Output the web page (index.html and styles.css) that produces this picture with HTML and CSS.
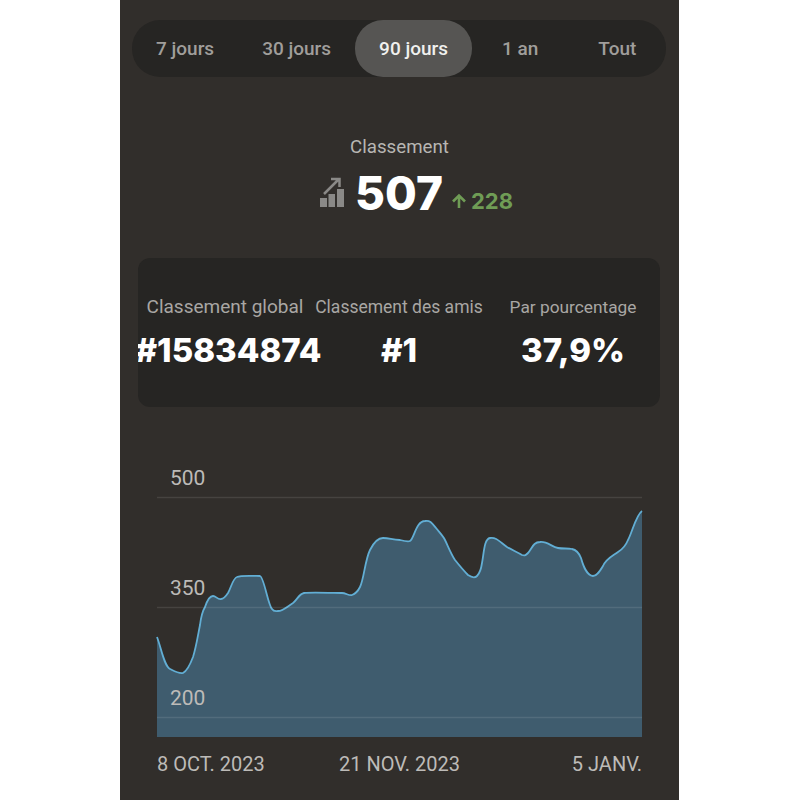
FILE: index.html
```html
<!DOCTYPE html>
<html lang="fr">

<head>
    <meta charset="UTF-8">
    <meta name="viewport" content="width=device-width, initial-scale=1.0">
    <title>Classement</title>
    <link rel="stylesheet" href="styles.css">
</head>

<body>

    <section class="ecran">
        <div class="tabs">
            <div class="tab">7 jours</div>
            <div class="tab">30 jours</div>
            <div class="tab active">90 jours</div>
            <div class="tab">1 an</div>
            <div class="tab">Tout</div>
        </div>

        <p class="titre">Classement</p>
        <div class="score">
            <svg class="score-icon" width="26" height="32" viewBox="0 0 26 32">
                <rect x="1" y="21" width="7" height="9" />
                <rect x="9.5" y="17" width="6.5" height="13" />
                <rect x="18" y="12" width="7" height="18" />
                <path class="fleche" d="M5 17L20 2M12 2H20.5V10" />
            </svg>
            <span class="score-num">507</span>
            <svg class="up-icon" width="16" height="16" viewBox="0 0 16 16">
                <path d="M8 15V2.5M2 8.5L8 2.5L14 8.5" />
            </svg>
            <span class="score-diff">228</span>
        </div>

        <div class="stats">
            <div class="stat stat-global">
                <p>Classement global</p>
                <b>#15834874</b>
            </div>
            <div class="stat stat-amis">
                <p>Classement des amis</p>
                <b>#1</b>
            </div>
            <div class="stat stat-pourcent">
                <p>Par pourcentage</p>
                <b>37,9%</b>
            </div>
        </div>

        <svg class="chart" width="560" height="330" viewBox="120 460 560 330">
            <path class="area" d="M157 637C161 647 164 666 170 669C174 671 179 674 183 673C187 671 190 665 193 657C196 648 198 635 200 625C201 617 202 612 205 607C207 601 210 596 213 596C216 596 218 600 221 599C224 599 226 596 228 593C231 588 233 578 237 577C241 575 256 576 260 576C264 577 268 605 272 609C274 612 276 611 278 611C283 611 288 606 293 603C297 600 299 594 304 593C310 592 336 593 342 593C346 593 349 596 352 595C355 594 358 591 360 587C364 579 365 560 370 550C373 544 378 538 383 538C390 538 392 540 400 540C404 541 408 542 410 541C414 539 416 521 425 521C430 520 432 523 436 528C440 533 443 536 445 540C448 546 451 554 455 560C459 565 464 571 468 575C471 577 475 578 477 576C480 573 481 570 482 563C484 553 484 539 490 538C496 537 499 541 507 547C512 550 517 552 522 555C525 556 526 555 528 553C532 549 533 542 540 542C547 541 552 547 558 548C563 549 568 548 572 549C577 550 579 553 581 558C583 565 586 575 593 576C597 576 600 571 603 566C606 559 611 557 618 552C623 549 626 545 628 540C632 533 636 515 642 511V737H157Z" />
            <path class="courbe" d="M157 637C161 647 164 666 170 669C174 671 179 674 183 673C187 671 190 665 193 657C196 648 198 635 200 625C201 617 202 612 205 607C207 601 210 596 213 596C216 596 218 600 221 599C224 599 226 596 228 593C231 588 233 578 237 577C241 575 256 576 260 576C264 577 268 605 272 609C274 612 276 611 278 611C283 611 288 606 293 603C297 600 299 594 304 593C310 592 336 593 342 593C346 593 349 596 352 595C355 594 358 591 360 587C364 579 365 560 370 550C373 544 378 538 383 538C390 538 392 540 400 540C404 541 408 542 410 541C414 539 416 521 425 521C430 520 432 523 436 528C440 533 443 536 445 540C448 546 451 554 455 560C459 565 464 571 468 575C471 577 475 578 477 576C480 573 481 570 482 563C484 553 484 539 490 538C496 537 499 541 507 547C512 550 517 552 522 555C525 556 526 555 528 553C532 549 533 542 540 542C547 541 552 547 558 548C563 549 568 548 572 549C577 550 579 553 581 558C583 565 586 575 593 576C597 576 600 571 603 566C606 559 611 557 618 552C623 549 626 545 628 540C632 533 636 515 642 511" />
            <line class="grille" x1="157" y1="497.5" x2="642" y2="497.5" />
            <line class="grille" x1="157" y1="607.5" x2="642" y2="607.5" />
            <line class="grille" x1="157" y1="717.5" x2="642" y2="717.5" />
            <text class="axe valeur" x="170" y="485">500</text>
            <text class="axe valeur" x="170" y="595">350</text>
            <text class="axe valeur" x="170" y="705">200</text>
            <text class="axe" x="157" y="771">8 OCT. 2023</text>
            <text class="axe" x="339" y="771">21 NOV. 2023</text>
            <text class="axe fin" x="642" y="771">5 JANV.</text>
        </svg>
    </section>

</body>

</html>
```

FILE: styles.css
```css
body {
    margin: 0;
    background-color: white;
    font-family: Roboto, "Liberation Sans", sans-serif;
}

.ecran {
    width: 559px;
    height: 800px;
    margin-left: 120px;
    background-color: #312e2b;
    overflow: hidden;
}

.tabs {
    display: flex;
    height: 57px;
    margin: 20px 13px 0 12px;
    background-color: #262523;
    border-radius: 28px;
}

.tab {
    display: flex;
    align-items: center;
    padding: 0 24px;
    color: #a09e9b;
    font-size: 19px;
    font-weight: 500;
    border-radius: 28px;
}

.tab:nth-child(4) {
    margin-left: 6px;
}

.tab:nth-child(5) {
    margin-left: 12px;
}

.active {
    background-color: #565553;
    color: #f0f0ee;
}

.titre {
    margin: 59px 0 0;
    text-align: center;
    color: #b8b6b3;
    font-size: 18.7px;
    line-height: 22px;
}

.score {
    display: flex;
    justify-content: center;
    align-items: center;
    height: 50px;
    margin-top: 10px;
    padding-left: 33px;
}

.score-icon {
    margin-right: 10px;
    fill: #8a8987;
}

.fleche {
    fill: none;
    stroke: #8a8987;
    stroke-width: 2.5;
}

.score-num {
    color: white;
    font-family: Inter, sans-serif;
    font-size: 46px;
    font-weight: 800;
    line-height: 50px;
}

.up-icon {
    margin: 16px 4px 0 8px;
    fill: none;
    stroke: #6f9c55;
    stroke-width: 2.6;
}

.score-diff {
    margin-top: 16px;
    color: #6f9c55;
    font-family: Inter, sans-serif;
    font-size: 22px;
    font-weight: 700;
}

.stats {
    display: grid;
    grid-template-columns: repeat(3, 174px);
    height: 149px;
    margin: 40px 19px 0 18px;
    background-color: #262523;
    border-radius: 12px;
    overflow: hidden;
}

.stat {
    display: flex;
    flex-direction: column;
    align-items: center;
    padding-top: 37px;
    white-space: nowrap;
}

.stat p {
    margin: 0;
    color: #a9a7a4;
    font-size: 17.5px;
    line-height: 24px;
}

.stat-global p {
    font-size: 19px;
}

.stat-global b {
    padding-left: 7px;
}

.stat-pourcent p {
    font-size: 17.3px;
}

.stat b {
    margin-top: 11px;
    color: white;
    font-family: Inter, sans-serif;
    font-size: 33px;
    font-weight: 800;
    line-height: 40px;
}

.chart {
    display: block;
    margin-top: 53px;
}

.area {
    fill: #3f5c6e;
}

.courbe {
    fill: none;
    stroke: #62aed4;
    stroke-width: 1.8;
}

.grille {
    stroke: #ffffff;
    stroke-opacity: 0.1;
    stroke-width: 1.5;
}

.axe {
    fill: #bdbbb8;
    font-family: Roboto, sans-serif;
    font-size: 20px;
}

.valeur {
    font-size: 21px;
}

.fin {
    text-anchor: end;
}
```
